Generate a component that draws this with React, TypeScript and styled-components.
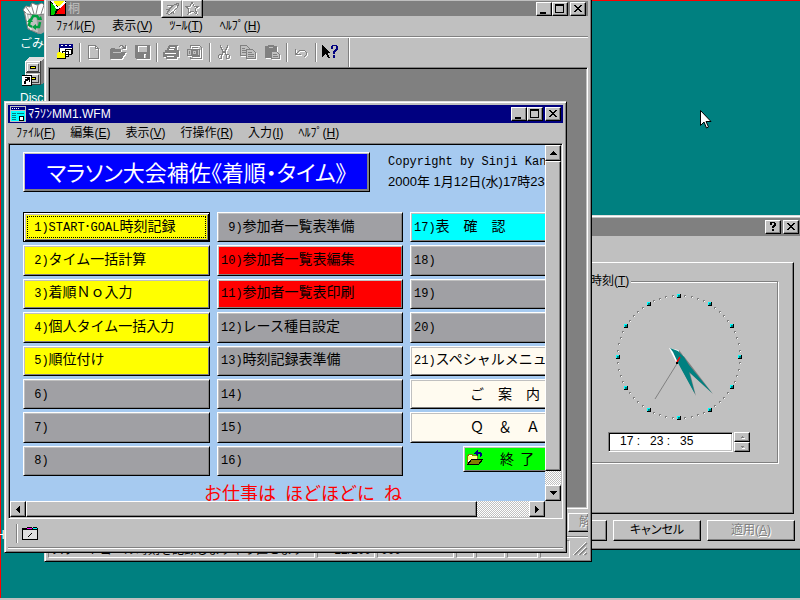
import React from 'react';
import styled, { createGlobalStyle, css } from 'styled-components';

const face = '#c0c0c0';
const shade = '#808080';
const ui = '"Liberation Sans", "Noto Sans CJK JP", sans-serif';
const jp = '"Noto Sans CJK JP", sans-serif';
const mono = '"Liberation Mono", "Noto Sans CJK JP", monospace';

const GlobalStyle = createGlobalStyle`
  * { box-sizing: border-box; }
  body { margin: 0; background: #008080; }
  button, input, fieldset { margin: 0; padding: 0; border: 0; border-radius: 0; background: none; color: inherit; font: inherit; }
  svg { display: block; flex: none; }
`;

const raised = css`
  border: 1px solid;
  border-color: #fff #000 #000 #fff;
  box-shadow: inset -1px -1px 0 ${shade};
`;

const Desktop = styled.main`
  position: relative;
  height: 100vh;
  overflow: hidden;
  background: #008080;
  box-shadow: inset 1px 1px 0 #f00;
  color: #000;
  font: 12px/16px ${ui};
`;

const Shortcuts = styled.div`
  display: flex;
  flex-direction: column;
  align-items: flex-start;
  gap: 4px;
  padding: 2px 0 0 18px;
`;

const Shortcut = styled.a`
  display: flex;
  flex-direction: column;
  gap: 2px;
  color: #fff;
  text-decoration: none;
  white-space: nowrap;
  svg { margin-left: 4px; }
  span { padding-left: 2px; }
`;

const EdgeLabel = styled.span`
  position: absolute;
  left: -4px;
  top: 527px;
  color: #fff;
`;

const Taskbar = styled.footer`
  position: absolute;
  left: 0;
  right: 0;
  bottom: 0;
  height: 2px;
  background: ${face};
`;

const Pointer = styled.svg`
  position: absolute;
  left: 699px;
  top: 109px;
`;

const Window = styled.section`
  position: absolute;
  display: flex;
  flex-direction: column;
  background: ${face};
  border: 1px solid;
  border-color: #dfdfdf #000 #000 #dfdfdf;
  box-shadow: inset 1px 1px 0 #fff, inset -1px -1px 0 ${shade};
  padding: 3px;
`;
const AppWindow = styled(Window)`left: 44px; right: 208px; top: -3px;`;
const FormWindow = styled(Window)`left: 4px; right: 233px; top: 101px;`;
const ClockWindow = styled(Window)`width: 300px; right: -4px; top: 215px; padding: 2px;`;

const TitleBar = styled.header<{ $active?: boolean; $short?: boolean }>`
  display: flex;
  align-items: center;
  gap: 2px;
  height: ${p => (p.$short ? 15 : 18)}px;
  padding: 0 2px;
  background: ${p => (p.$active ? '#000080' : shade)};
  color: ${p => (p.$active ? '#fff' : face)};
`;
const TitleText = styled.span`flex: 1; white-space: nowrap;`;
const TitleButtons = styled.div`display: flex; button:last-child { margin-left: 2px; }`;
const TitleButton = styled.button`
  ${raised}
  width: 16px;
  height: 14px;
  background: ${face};
`;

const MenuBar = styled.nav<{ $wide?: boolean }>`
  display: flex;
  gap: ${p => (p.$wide ? 17 : 15)}px;
  height: 20px;
  padding: 0 8px;
`;
const MenuItem = styled.button`white-space: nowrap; line-height: 18px;`;

const Groove = styled.hr`
  margin: 0;
  height: 2px;
  border: 0;
  border-top: 1px solid ${shade};
  background: #fff;
`;

const FloatingTools = styled.div`
  position: absolute;
  left: 116px;
  top: 1px;
  display: flex;
  border: 1px solid;
  border-color: #fff #000 #000 #fff;
`;
const FloatingTool = styled.button`
  border: 1px solid;
  border-color: #fff ${shade} ${shade} #fff;
  background: ${face};
  padding: 1px;
`;

const Toolbar = styled.div`
  display: flex;
  align-items: center;
  align-self: flex-start;
  height: 29px;
  padding: 0 6px 1px 5px;
  border-right: 1px solid ${shade};
  box-shadow: 1px 0 0 #fff;
`;
const ToolButton = styled.button<{ $off?: boolean }>`
  display: flex;
  justify-content: center;
  width: 24px;
  ${p => p.$off && css`color: ${shade}; filter: drop-shadow(1px 1px 0 #fff);`}
`;
const ToolSeparator = styled.i`
  width: 2px;
  height: 19px;
  margin: 0 1px 0 2px;
  background: #fff;
  border-left: 1px solid ${shade};
`;

const Workspace = styled.div`
  min-height: 442px;
  background: ${shade};
  border: 1px solid;
  border-color: ${shade} #fff #fff ${shade};
  box-shadow: inset 1px 1px 0 #000, inset -1px -1px 0 ${face};
`;

const ActionRow = styled.div`
  display: flex;
  justify-content: flex-end;
  align-items: center;
  height: 27px;
`;
const ActionButton = styled.button`
  ${raised}
  border-right: 0;
  width: 20px;
  height: 19px;
  padding-left: 10px;
  overflow: hidden;
  white-space: nowrap;
  line-height: 17px;
  text-align: left;
  color: ${shade};
  text-shadow: 1px 1px 0 #fff;
`;

const StatusBar = styled.div`
  display: flex;
  gap: 2px;
  height: 20px;
  padding-top: 2px;
`;
const StatusPane = styled.div<{ $w?: number; $end?: boolean }>`
  ${p => (p.$w ? `width: ${p.$w}px;` : 'flex: 1; min-width: 0;')}
  border: 1px solid;
  border-color: ${shade} #fff #fff ${shade};
  padding: 0 3px;
  overflow: hidden;
  white-space: nowrap;
  line-height: 18px;
  text-align: ${p => (p.$end ? 'right' : 'left')};
`;

const Sunken = styled.div`
  display: grid;
  grid-template-columns: 1fr 16px;
  grid-template-rows: 356px 16px;
  border: 1px solid;
  border-color: ${shade} #fff #fff ${shade};
  padding: 1px;
  box-shadow: inset 1px 1px 0 #000, inset -1px -1px 0 ${face};
`;

const Canvas = styled.div`
  overflow: hidden;
  min-width: 0;
  background: #a6caf0;
  padding: 7px 0 0 13px;
`;
const Top = styled.div`display: flex; gap: 18px; margin-bottom: 20px;`;
const Banner = styled.h1`
  flex: none;
  width: 347px;
  height: 40px;
  margin: 0;
  border: 1px solid;
  border-color: #fff #000 #000 #fff;
  box-shadow: inset 1px 1px 0 ${face}, inset -2px -2px 0 ${shade};
  background: #00f;
  color: #fff;
  font: 400 22px/36px ${jp};
  font-feature-settings: "palt";
  text-align: center;
  white-space: nowrap;
`;
const Credits = styled.div`white-space: nowrap;`;
const Copyright = styled.p`margin: 0; font: 12px/20px ${mono};`;
const Stamp = styled.p`margin: 0; font: 13px/20px ${ui};`;

const MenuGrid = styled.div`
  display: grid;
  grid-template-columns: 187px 186px 186px;
  grid-template-rows: repeat(8, 1fr);
  grid-auto-flow: column;
  gap: 3px 7px;
  height: 264px;
`;

const fills = { yellow: '#ff0', gray: '#a0a0a4', red: '#f00', cyan: '#0ff', cream: '#fffbf0', green: '#0f0' };
type Fill = keyof typeof fills;

const FormButton = styled.button<{ $fill: Fill; $focused?: boolean; $exit?: boolean }>`
  display: flex;
  align-items: center;
  padding: 0 3px 2px;
  border: 1px solid;
  border-color: #fff #000 #000 #fff;
  box-shadow: inset 1px 1px 0 ${face}, inset -1px -1px 0 ${shade};
  background: ${p => fills[p.$fill]};
  font: 14px/20px ${jp};
  white-space: pre;
  ${p => p.$focused && css`
    border-color: #000;
    box-shadow: inset 1px 1px 0 #fff, inset -1px -1px 0 #000, inset 2px 2px 0 ${face}, inset -2px -2px 0 ${shade};
    outline: 1px dotted #000;
    outline-offset: -5px;
  `}
  ${p => p.$exit && css`
    justify-self: end;
    align-self: start;
    width: 133px;
    height: 26px;
    gap: 17px;
  `}
`;
const Code = styled.span`font-family: ${mono}; font-size: 12px;`;

const Message = styled.p`
  display: flex;
  gap: 9px;
  margin: 4px 0 0 181px;
  color: #f00;
  font: 18px/24px ${jp};
`;

const ScrollBar = styled.div<{ $vertical?: boolean }>`
  display: flex;
  flex-direction: ${p => (p.$vertical ? 'column' : 'row')};
  background: repeating-conic-gradient(#fff 0 25%, ${face} 0 50%) 0 0 / 2px 2px;
`;
const ScrollButton = styled.button`
  ${raised}
  display: flex;
  flex: none;
  align-items: center;
  justify-content: center;
  width: 16px;
  height: 16px;
  background: ${face};
`;
const Thumb = styled.div<{ $grow: number }>`
  ${raised}
  flex: ${p => p.$grow} 0 0;
  background: ${face};
`;
const Rest = styled.div<{ $grow: number }>`flex: ${p => p.$grow} 0 0;`;

const FormStatus = styled.div`
  display: flex;
  align-items: center;
  gap: 3px;
  height: 28px;
  padding-left: 6px;
`;

const TabPage = styled.div`
  display: flex;
  justify-content: flex-end;
  margin: 26px 7px 6px 4px;
  padding: 10px 15px 50px 0;
  border: 1px solid;
  border-color: #fff #000 #000 #fff;
  box-shadow: inset -1px -1px 0 ${shade};
`;
const Group = styled.fieldset`
  display: flex;
  flex-direction: column;
  align-items: center;
  gap: 10px;
  width: 198px;
  height: 190px;
  padding: 3px 0 0;
  border: 1px solid ${shade};
  box-shadow: 1px 1px 0 #fff, inset 1px 1px 0 #fff;
`;
const Legend = styled.legend`
  margin-left: 7px;
  padding: 0 2px;
  background: ${face};
`;
const TimeRow = styled.div`display: flex; gap: 1px;`;
const TimeInput = styled.input`
  width: 125px;
  height: 20px;
  padding: 0 11px 3px;
  border: 1px solid;
  border-color: ${shade} #fff #fff ${shade};
  box-shadow: inset 1px 1px 0 #000, inset -1px -1px 0 ${face};
  background: #fff;
  font: 12px/16px ${ui};
  white-space: pre;
`;
const Spinner = styled.div`
  display: flex;
  flex-direction: column;
  button { width: 16px; height: 10px; color: ${shade}; }
`;
const DialogButtons = styled.div`
  display: flex;
  justify-content: flex-end;
  gap: 6px;
  padding: 0 6px 6px 0;
`;
const DialogButton = styled.button<{ $off?: boolean }>`
  ${raised}
  flex: none;
  width: 88px;
  height: 21px;
  line-height: 17px;
  font-feature-settings: "palt";
  ${p => p.$off && css`color: ${shade}; text-shadow: 1px 1px 0 #fff;`}
`;

const Pic = ({ children, w = 16, h = 16, smooth }: { children: React.ReactNode; w?: number; h?: number; smooth?: boolean }) => (
  <svg width={w} height={h} viewBox={`0 0 ${w} ${h}`} fill="none" shapeRendering={smooth ? 'auto' : 'crispEdges'} aria-hidden="true">
    {children}
  </svg>
);

const glyphs = {
  min: <path fill="#000" d="M3 9h6v2H3z" />,
  max: <path fill="#000" fillRule="evenodd" d="M2 1h9v9H2zM3 3v6h7V3z" />,
  close: <path fill="#000" d="M3 2h2v1h1v1h2V3h1V2h2v1h-1v1H9v1H8v1h1v1h1v1h1v1H9V8H8V7H6v1H5v1H3V8h1V7h1V6h1V5H5V4H4V3H3z" />,
  help: <path fill="#000" d="M4 1h5v1h1v3H9v1H8v1H6V5h1V4h1V2H6v2H4zM6 8h2v2H6z" />,
};
const TitleControl = ({ kind, label }: { kind: keyof typeof glyphs; label: string }) => (
  <TitleButton aria-label={label}><Pic w={14} h={12}>{glyphs[kind]}</Pic></TitleButton>
);

const Arrow = ({ dir, small }: { dir: 'up' | 'down' | 'left' | 'right'; small?: boolean }) => {
  const shapes = {
    up: 'M3 0h1v1h1v1h1v1h1v1H0V3h1V2h1V1h1z',
    down: 'M0 0h7v1H6v1H5v1H4v1H3V3H2V2H1V1H0z',
    left: 'M3 0h1v7H3V6H2V5H1V4H0V3h1V2h1V1h1z',
    right: 'M0 0h1v1h1v1h1v1h1v1H3v1H2v1H1v1H0z',
  };
  const tall = dir === 'left' || dir === 'right';
  if (small) {
    return <Pic w={5} h={3}><path fill={shade} d={dir === 'up' ? 'M2 0h1v1h1v1H1V1h1z' : 'M1 0h3v1H3v1H2V1H1z'} /><path fill="#fff" d="M2 2h3v1H2z" /></Pic>;
  }
  return <Pic w={tall ? 4 : 7} h={tall ? 7 : 4}><path fill="#000" d={shapes[dir]} /></Pic>;
};

const BinIcon = () => (
  <Pic w={32} h={32} smooth>
    <path fill={face} d="M2 9l4 18 11 5 7-3 5-20z" />
    <path fill="#a0a0a0" d="M14 12l2 19 3 1 5-3 5-20z" />
    <path fill="#fff" stroke={shade} d="M1 8l3-4 4 1 2-4 5 2 5-2 3 3 5 1 1 4-6 3-8 1-10-1z" />
    <path stroke={shade} d="M4 5l5 7M9 2l3 10M16 3l-2 9M22 3l-3 9M27 6l-5 6M2 9l4 18 12 5" />
    <path stroke="#fff" d="M4 11l3 15M7 13l2 15" />
    <path stroke="#00a040" strokeWidth="2.5" d="M9 18l2-4h4l2 3M18 20l-1 5h-4M10 25l-3-2 1-4" />
    <path fill="#00a040" d="M15 18h5l-1-4zM14 22v6l-4-3zM5 20l3-4 3 4z" />
  </Pic>
);
const CabinetIcon = () => (
  <Pic w={32} h={32}>
    <path fill={shade} d="M17 6l6-5h3v22l-6 5h-3z" />
    <path fill="#dfdfdf" d="M3 5l5-4h16l-5 4z" />
    <path fill={face} d="M3 5h15v23H3z" />
    <path stroke="#fff" d="M3 5.500h15M3.500 5v23" />
    <path fill="#404040" d="M18 5h1v24h-1zM3 28h16v1H3zM4 16h14v1H4z" />
    <path stroke="#404040" d="M16.500 8v7.500H5M16.500 19v7.500H5" />
    <path stroke="#fff" d="M5.500 15V7.500H16M5.500 26v-7.500H16" />
    <path fill="#ff0" stroke="#000" d="M8.500 10.500h5v2h-5zM8.500 21.500h5v2h-5z" />
    <path fill="#fff" stroke="#000" d="M-.5 19.500h10v10h-10z" />
    <path fill="#000" d="M3 21h5v5H7v-2H6v1H4v3H2v-3h1v-2h2v-1H3z" />
  </Pic>
);
const AppIcon = () => (
  <Pic>
    <path fill="#000" d="M0 0h16v15H0z" />
    <path fill="#ff0" d="M2 0h12L8 6z" />
    <path fill="#0c0" d="M1 2l6 5-3 7H1z" />
    <path fill="#f00" d="M9 8l6-5v10H6z" />
    <path stroke="#fff" strokeWidth="2" d="M2 0l5 7 3-1M15 1l-6 6" />
  </Pic>
);
const FormIcon = () => (
  <Pic>
    <path fill={face} d="M0 0h16v16H0z" />
    <path fill="#000080" d="M1 1h14v3H1z" />
    <path fill="#fff" d="M2 2h1v1H2zM4 2h1v1H4zM6 2h1v1H6zM8 2h1v1H8z" />
    <path fill="#0ff" d="M1 5h14v10H1z" />
    <path fill="#008080" d="M2 7h4v1H2zM2 9h4v1H2zM2 11h4v1H2zM2 13h4v1H2zM7 7h7v1H7z" />
    <path fill="#fff" stroke="#000" d="M9.500 10.500h4v4h-4z" />
  </Pic>
);
const ToolFormsIcon = () => (
  <Pic>
    <path fill="#fff" d="M2 1h14v8H2z" />
    <path fill="#000080" d="M2 0h14v4H2z" />
    <path fill="#fff" d="M4 1h2v1H4zM8 1h2v1H8zM12 1h2v1h-2z" />
    <path stroke="#000" d="M2.500 4v4M15.500 4v6" />
    <path fill="#fff" stroke="#000" d="M8.500 5.500h6v5h-6zM5.500 7.500h6v5h-6z" />
    <path fill="#ff0" d="M1 8h3v1h4v5H0V9h1z" />
    <path stroke="#000" d="M0 14.500h8.500V9" />
  </Pic>
);
const NewIcon = () => <Pic><path stroke="currentColor" d="M2.500 1.500h7l3 3v10h-10zM9.500 1.500v3h3" /></Pic>;
const OpenIcon = () => (
  <Pic><path fill="currentColor" d="M0 5h1V4h4v1h6v3h5l-4 7H0zM9 2h1V1h3v1h1v1h1V1h1v4h-4V4h1V3h-1V2h-2v1H9z" /><path stroke={face} d="M3 8.500h8" /></Pic>
);
const SaveIcon = () => <Pic><path fill="currentColor" fillRule="evenodd" d="M1 1h15v14H2l-1-1zM4 2v6h9V2zM10 10v4h2v-4z" /></Pic>;
const PrintIcon = () => (
  <Pic><path fill="currentColor" fillRule="evenodd" d="M6 1h9v1h-1v4h2v7h-2v2H3v-2H0V8h2V6h2V4h1V2h1zM7 3v1h5V3zM6 5v1h5V5zM2 9v1h11V9zM4 12v1h7v-1z" /></Pic>
);
const PreviewIcon = () => (
  <Pic>
    <path stroke="currentColor" d="M3.500 4V1.500h9l2 2v11h-11V13M5 3.500h6M5 12.500h8" />
    <path fill={face} stroke="currentColor" d="M.5 5.500h12v6H.5z" />
    <path fill={face} stroke="currentColor" strokeWidth="2" d="M5 6h5v5H5z" />
    <path fill="currentColor" d="M2 7h1v3H2zM7 8h1v1H7z" />
  </Pic>
);
const CutIcon = () => (
  <Pic>
    <path fill="currentColor" d="M4 1h1v2h1v2h1v2h2V5h1V3h1V1h1v3h-1v2h-1v3H6V6H5V4H4zM6 9h1v2H6zM9 9h1v2H9z" />
    <path stroke="currentColor" d="M3.500 10.500h2v4h-2l-1-1v-2zM10.500 10.500h2l1 1v2l-1 1h-2z" />
  </Pic>
);
const CopyIcon = () => (
  <Pic><path fill={face} stroke="currentColor" d="M.5 1.500h6l3 3v7h-9zM2 4.500h3M2 6.500h5M2 8.500h5" /><path fill={face} stroke="currentColor" d="M6.500 5.500h6l3 3v6h-9zM8 8.500h4M8 10.500h6M8 12.500h6" /></Pic>
);
const PasteIcon = () => (
  <Pic><path fill="currentColor" d="M1 2h3V1h6v1h3v12H1z" /><path fill={face} d="M5 3h4v1H5z" /><path fill={face} stroke="currentColor" d="M7.500 7.500h5l3 3v4h-8zM9 10.500h4M9 12.500h5" /></Pic>
);
const UndoIcon = () => <Pic><path stroke="currentColor" d="M2.500 5v5.500H8M3 10l4-4h4l2 2v3l-2 2" /></Pic>;
const WhatIcon = () => (
  <Pic w={18}>
    <path fill="#000" d="M1 1h1v1h1v1h1v1h1v1h1v1h1v1h1v1h1v1H7v2h1v2h1v1H7v-1H6v-2H5v-1H4v1H3v1H2v1H1z" />
    <path fill="#000080" d="M10 2h1V1h5v1h1v4h-1v1h-1v1h-1v2h-2V7h1V6h1V5h1V2h-3v3h-2zM12 11h2v3h-2z" />
  </Pic>
);
const PenIcon = () => (
  <Pic w={16} h={13}>
    <path stroke="#fff" d="M4.500 12.500L14.500 2.500M4 4.500h5M9.500 7v5l4-8" />
    <path stroke={shade} d="M2.500 11.500l4-5 4-4 4-1-1 4-4 4-4 3zM3 3.500h5l-3 4M9.500 9v3M2 7.500h3" />
  </Pic>
);
const StarIcon = () => (
  <Pic w={16} h={13}><path stroke="#fff" d="M9 1l2 4h5l-4 3 2 5-5-3-4 3 1-5-4-3h5z" /><path stroke={shade} d="M8 0l2 4h5l-4 3 2 5-5-3-4 3 1-5-4-3h5z" /></Pic>
);
const ExitIcon = () => (
  <Pic>
    <path fill="#fff" stroke="#808000" d="M.5 14.500v-9h1v-1h4v1h5v9z" />
    <path fill="#ff8" d="M1 6h9v4H1z" />
    <path fill="#808000" stroke="#000" d="M.5 14.500l4-5h11l-4 5z" />
    <path fill="#000080" d="M7 3h1V2h1V1h1V0h1v2h3v1h1v3h-1v1h-1V4h-2v2h-1V5H9V4H7z" />
  </Pic>
);
const StatusIcon = () => (
  <Pic w={16} h={13}>
    <path fill="#dfdfdf" stroke="#000" d="M.5 1.500h15v11H.5z" />
    <path fill="#f0f" d="M5 1h5v2H5z" /><path fill="#0ff" d="M11 1h4v2h-4z" />
    <path stroke="#000" d="M1 2.500h14M4.500.5h5M11 .5h4M6 9.500h1M7 8.500h1M8 7.500h1M9 6.500h1" />
  </Pic>
);
const Grip = () => (
  <Pic w={16} h={16} smooth>
    <path stroke="#fff" d="M1 15L14 2M6 15l8-8M11 15l3-3" />
    <path stroke={shade} strokeWidth="1.500" d="M2.500 15L15 3M7.500 15L15 8M12.500 15L15 13" />
  </Pic>
);

const ClockFace = () => (
  <svg width="130" height="130" viewBox="0 0 130 130" aria-hidden="true">
    <g shapeRendering="crispEdges">
      {Array.from({ length: 60 }, (_, i) => {
        const a = (i * Math.PI) / 30;
        const x = Math.round(65 + 61 * Math.sin(a));
        const y = Math.round(65 - 61 * Math.cos(a));
        return i % 5 === 0 ? (
          <g key={i}>
            <path fill="#000" d={`M${x - 2} ${y - 2}h4v4h-4z`} />
            <path fill="#0ff" d={`M${x - 2} ${y - 2}h3v3h-3z`} />
            <path fill="#008080" d={`M${x - 1} ${y - 1}h2v2h-2z`} />
          </g>
        ) : (
          <g key={i}>
            <path fill="#fff" d={`M${x - 1} ${y - 1}h2v2h-2z`} />
            <path fill={shade} d={`M${x - 1} ${y - 1}h2v1h-1v1h-1z`} />
          </g>
        );
      })}
    </g>
    <path stroke={shade} d="M64 70L41 107" />
    <path fill="#fff" d="M55 56l9 2 6 6-7 8 17 30-17-30z" />
    <path fill={shade} d="M65 58l11 14 23 30-23-21 6 23-17-32z" />
    <path fill="#008080" d="M56 56l8 3 6 6 5 8 23 28-23-21 6 22-17-31-5-11z" />
    <path stroke="#f00" strokeWidth="1.500" d="M66 65l-3 5" />
    <path fill="#000" d="M62 70h2v2h-2z" />
  </svg>
);

const Menu = ({ items, wide }: { items: [string, string][]; wide?: boolean }) => (
  <MenuBar $wide={wide}>
    {items.map(([name, key]) => <MenuItem key={name}>{name}(<u>{key}</u>)</MenuItem>)}
  </MenuBar>
);

const entries: { code: string; text?: string; fill: Fill; focused?: boolean }[] = [
  { code: ' 1)START･GOAL', text: '時刻記録', fill: 'yellow', focused: true },
  { code: ' 2)', text: 'タイム一括計算', fill: 'yellow' },
  { code: ' 3)', text: '着順Ｎｏ入力', fill: 'yellow' },
  { code: ' 4)', text: '個人タイム一括入力', fill: 'yellow' },
  { code: ' 5)', text: '順位付け', fill: 'yellow' },
  { code: ' 6)', fill: 'gray' },
  { code: ' 7)', fill: 'gray' },
  { code: ' 8)', fill: 'gray' },
  { code: ' 9)', text: '参加者一覧表準備', fill: 'gray' },
  { code: '10)', text: '参加者一覧表編集', fill: 'red' },
  { code: '11)', text: '参加者一覧表印刷', fill: 'red' },
  { code: '12)', text: 'レース種目設定', fill: 'gray' },
  { code: '13)', text: '時刻記録表準備', fill: 'gray' },
  { code: '14)', fill: 'gray' },
  { code: '15)', fill: 'gray' },
  { code: '16)', fill: 'gray' },
  { code: '17)', text: '表　確　認', fill: 'cyan' },
  { code: '18)', fill: 'gray' },
  { code: '19)', fill: 'gray' },
  { code: '20)', fill: 'gray' },
  { code: '21)', text: 'スペシャルメニュー', fill: 'cream' },
  { code: '', text: '　　　　ご　案　内', fill: 'cream' },
  { code: '', text: '　　　　Ｑ　＆　Ａ', fill: 'cream' },
];

export default function App() {
  return (
    <>
      <GlobalStyle />
      <Desktop>
        <Shortcuts>
          <Shortcut href="#bin"><BinIcon /><span>ごみ箱</span></Shortcut>
          <Shortcut href="#disc"><CabinetIcon /><span>Disc</span></Shortcut>
        </Shortcuts>
        <EdgeLabel>H</EdgeLabel>
        <Taskbar />

        <ClockWindow aria-label="時刻">
          <TitleBar>
            <TitleText />
            <TitleButtons>
              <TitleControl kind="help" label="ヘルプ" />
              <TitleControl kind="close" label="閉じる" />
            </TitleButtons>
          </TitleBar>
          <TabPage>
            <Group>
              <Legend>時刻(<u>T</u>)</Legend>
              <ClockFace />
              <TimeRow>
                <TimeInput aria-label="時刻" defaultValue="17 :   23 :   35" />
                <Spinner>
                  <ScrollButton aria-label="進める"><Arrow dir="up" small /></ScrollButton>
                  <ScrollButton aria-label="戻す"><Arrow dir="down" small /></ScrollButton>
                </Spinner>
              </TimeRow>
            </Group>
          </TabPage>
          <DialogButtons>
            <DialogButton>OK</DialogButton>
            <DialogButton>キャンセル</DialogButton>
            <DialogButton $off>適用(<u>A</u>)</DialogButton>
          </DialogButtons>
        </ClockWindow>

        <AppWindow aria-label="桐">
          <TitleBar $short>
            <AppIcon />
            <TitleText>桐</TitleText>
            <TitleButtons>
              <TitleControl kind="min" label="最小化" />
              <TitleControl kind="max" label="最大化" />
              <TitleControl kind="close" label="閉じる" />
            </TitleButtons>
          </TitleBar>
          <FloatingTools>
            <FloatingTool aria-label="ペン"><PenIcon /></FloatingTool>
            <FloatingTool aria-label="スター"><StarIcon /></FloatingTool>
          </FloatingTools>
          <Menu wide items={[['ﾌｧｲﾙ', 'F'], ['表示', 'V'], ['ﾂｰﾙ', 'T'], ['ﾍﾙﾌﾟ', 'H']]} />
          <Groove />
          <Toolbar>
            <ToolButton aria-label="フォーム"><ToolFormsIcon /></ToolButton>
            <ToolSeparator />
            <ToolButton $off aria-label="新規"><NewIcon /></ToolButton>
            <ToolButton $off aria-label="開く"><OpenIcon /></ToolButton>
            <ToolButton $off aria-label="保存"><SaveIcon /></ToolButton>
            <ToolSeparator />
            <ToolButton $off aria-label="印刷"><PrintIcon /></ToolButton>
            <ToolButton $off aria-label="プレビュー"><PreviewIcon /></ToolButton>
            <ToolSeparator />
            <ToolButton $off aria-label="切り取り"><CutIcon /></ToolButton>
            <ToolButton $off aria-label="コピー"><CopyIcon /></ToolButton>
            <ToolButton $off aria-label="貼り付け"><PasteIcon /></ToolButton>
            <ToolSeparator />
            <ToolButton $off aria-label="元に戻す"><UndoIcon /></ToolButton>
            <ToolSeparator />
            <ToolButton aria-label="ヘルプ"><WhatIcon /></ToolButton>
          </Toolbar>
          <Workspace />
          <ActionRow><ActionButton>解除</ActionButton></ActionRow>
          <Groove />
          <StatusBar>
            <StatusPane>スタートゴール時刻を記録しますやり直せます</StatusPane>
            <StatusPane $w={58} $end>12/100</StatusPane>
            <StatusPane $w={77}>000</StatusPane>
            <StatusPane $w={18} />
            <StatusPane $w={29} />
            <StatusPane $w={31} />
            <StatusPane $w={30} />
            <Grip />
          </StatusBar>
        </AppWindow>

        <FormWindow aria-label="マラソン">
          <TitleBar $active>
            <FormIcon />
            <TitleText>ﾏﾗｿﾝMM1.WFM</TitleText>
            <TitleButtons>
              <TitleControl kind="min" label="最小化" />
              <TitleControl kind="max" label="最大化" />
              <TitleControl kind="close" label="閉じる" />
            </TitleButtons>
          </TitleBar>
          <Menu items={[['ﾌｧｲﾙ', 'F'], ['編集', 'E'], ['表示', 'V'], ['行操作', 'R'], ['入力', 'I'], ['ﾍﾙﾌﾟ', 'H']]} />
          <Sunken>
            <Canvas>
              <Top>
                <Banner>マラソン大会補佐《着順・タイム》</Banner>
                <Credits>
                  <Copyright>Copyright by Sinji Kanai</Copyright>
                  <Stamp>2000年 1月12日(水)17時23分</Stamp>
                </Credits>
              </Top>
              <MenuGrid>
                {entries.map(e => (
                  <FormButton key={e.code + e.text} $fill={e.fill} $focused={e.focused}>
                    <span>{e.code && <Code>{e.code}</Code>}{e.text}</span>
                  </FormButton>
                ))}
                <FormButton $fill="green" $exit><ExitIcon /><span>終  了</span></FormButton>
              </MenuGrid>
              <Message><span>お仕事は</span><span>ほどほどに</span><span>ね</span></Message>
            </Canvas>
            <ScrollBar $vertical>
              <ScrollButton aria-label="上へ"><Arrow dir="up" /></ScrollButton>
              <Thumb $grow={310} />
              <Rest $grow={14} />
              <ScrollButton aria-label="下へ"><Arrow dir="down" /></ScrollButton>
            </ScrollBar>
            <ScrollBar>
              <ScrollButton aria-label="左へ"><Arrow dir="left" /></ScrollButton>
              <Thumb $grow={451} />
              <Rest $grow={52} />
              <ScrollButton aria-label="右へ"><Arrow dir="right" /></ScrollButton>
            </ScrollBar>
          </Sunken>
          <FormStatus><ToolSeparator /><StatusIcon /></FormStatus>
          <Groove />
        </FormWindow>

        <Pointer width="13" height="20" viewBox="0 0 13 20" aria-hidden="true">
          <path fill="#fff" stroke="#000" d="M1.500 1.500v15l3.500-3.500 2.500 6 2-1-2.500-5.500h5z" />
        </Pointer>
      </Desktop>
    </>
  );
}
